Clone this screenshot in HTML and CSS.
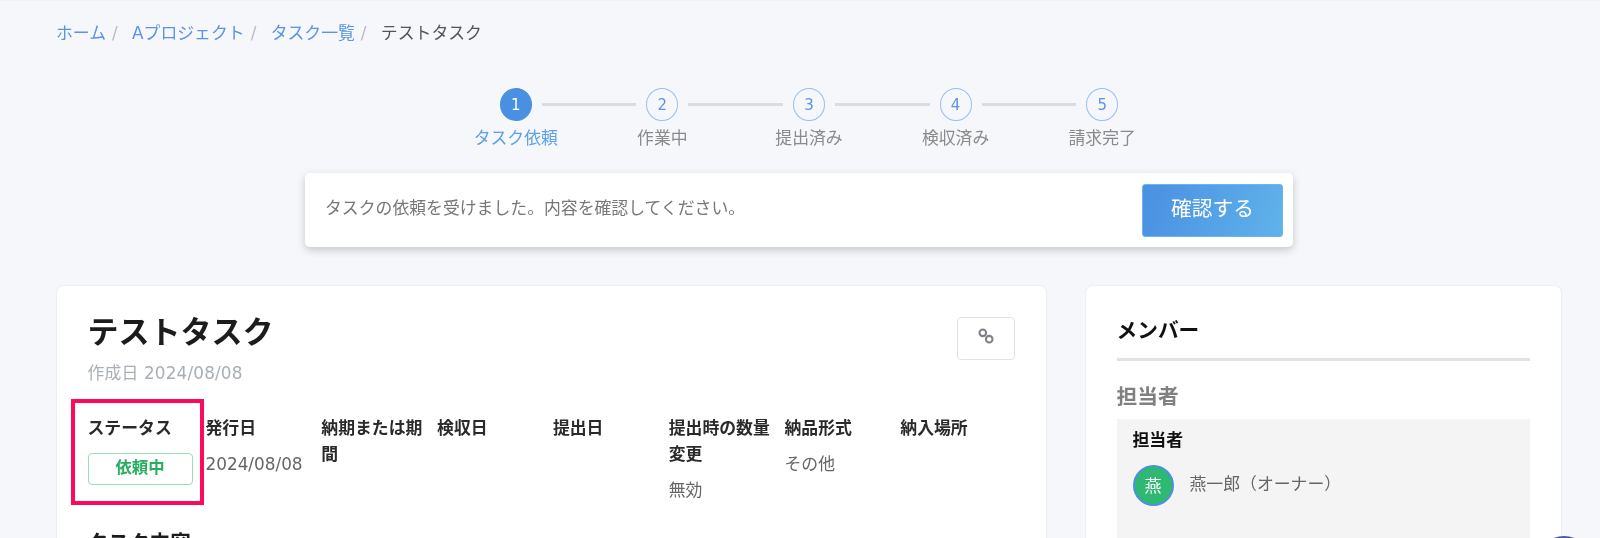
FILE: index.html
```html
<!DOCTYPE html>
<html lang="ja">
<head>
<meta charset="utf-8">
<title>テストタスク</title>
<link rel="stylesheet" href="styles.css">
</head>
<body>
<div class="page">
  <nav class="crumbs">
    <a class="crumb">ホーム</a><span class="sep">/</span>
    <a class="crumb">Aプロジェクト</a><span class="sep">/</span>
    <a class="crumb">タスク一覧</a><span class="sep">/</span>
    <span class="crumb-current">テストタスク</span>
  </nav>

  <ol class="steps">
    <li class="step active"><div class="track"><span class="seg blank"></span><span class="dot">1</span><span class="seg"></span></div><span class="step-label">タスク依頼</span></li>
    <li class="step"><div class="track"><span class="seg"></span><span class="dot">2</span><span class="seg"></span></div><span class="step-label">作業中</span></li>
    <li class="step"><div class="track"><span class="seg"></span><span class="dot">3</span><span class="seg"></span></div><span class="step-label">提出済み</span></li>
    <li class="step"><div class="track"><span class="seg"></span><span class="dot">4</span><span class="seg"></span></div><span class="step-label">検収済み</span></li>
    <li class="step"><div class="track"><span class="seg"></span><span class="dot">5</span><span class="seg blank"></span></div><span class="step-label">請求完了</span></li>
  </ol>

  <div class="notice">
    <p class="notice-text">タスクの依頼を受けました。内容を確認してください。</p>
    <button class="notice-btn">確認する</button>
  </div>

  <div class="columns">
    <section class="card main">
      <div class="head">
        <div>
          <h1 class="title">テストタスク</h1>
          <p class="created">作成日 2024/08/08</p>
        </div>
        <button class="link-btn" aria-label="リンク">
          <svg class="link-icon" viewBox="0 0 16 16" width="16" height="16" fill="none" stroke="#7f8286" stroke-width="2.1">
            <circle cx="4.8" cy="4.8" r="3.3"/>
            <circle cx="11.2" cy="11.2" r="3.3"/>
          </svg>
        </button>
      </div>
      <div class="meta">
        <div class="meta-item status">
          <div class="meta-label">ステータス</div>
          <div class="badge">依頼中</div>
          <div class="highlight"></div>
        </div>
        <div class="meta-item"><div class="meta-label">発行日</div><div class="meta-value">2024/08/08</div></div>
        <div class="meta-item"><div class="meta-label">納期または期間</div></div>
        <div class="meta-item"><div class="meta-label">検収日</div></div>
        <div class="meta-item"><div class="meta-label">提出日</div></div>
        <div class="meta-item"><div class="meta-label">提出時の数量変更</div><div class="meta-value">無効</div></div>
        <div class="meta-item"><div class="meta-label">納品形式</div><div class="meta-value">その他</div></div>
        <div class="meta-item"><div class="meta-label">納入場所</div></div>
      </div>
      <h2 class="section-title">タスク内容</h2>
    </section>

    <aside class="card side">
      <h2 class="side-title">メンバー</h2>
      <h3 class="side-sub">担当者</h3>
      <div class="panel">
        <div class="panel-label">担当者</div>
        <div class="person">
          <span class="avatar">燕</span>
          <span class="person-name">燕一郎（オーナー）</span>
        </div>
      </div>
    </aside>
  </div>
</div>
<div class="float-btn"></div>
</body>
</html>
```

FILE: styles.css
```css
* { box-sizing: border-box; }
html, body { margin: 0; padding: 0; height: 100%; overflow: hidden; }
body {
  background: #f5f7fb;
  color: #333;
  font-family: "DejaVu Sans", "Noto Sans CJK JP", sans-serif;
  font-size: 16.85px;
  position: relative;
}
p, h1, h2, h3, ol { margin: 0; padding: 0; }
.page { height: 538px; padding: 22px 39px 0 57px; border-top: 1px solid #f0f1f4; overflow: hidden; filter: blur(.3px); }

.crumbs { display: flex; align-items: center; height: 21px; line-height: 21px; white-space: nowrap; margin-left: -1px; }
.crumb { color: #5a94e4; }
.crumb-current { color: #555; margin-left: 13px; }
.sep { color: #bbb; margin: 0 0 0 6px; width: 7px; }
.sep + .crumb { margin-left: 13px; }

.steps { list-style: none; display: flex; margin: 44px 0 0 385.5px; }
.step { width: 146.6px; display: flex; flex-direction: column; align-items: center; }
.track { width: 100%; display: flex; align-items: center; }
.seg { flex: 1; height: 2.5px; background: #dcdcdc; }
.seg:first-child { margin-right: 10px; }
.seg:last-child { margin-left: 10px; }
.seg.blank { background: transparent; }
.dot {
  width: 32px; height: 33px; border-radius: 50%;
  border: 1.5px solid #98bdee;
  color: #5a94e4; background: transparent;
  display: flex; align-items: center; justify-content: center;
  font-size: 15px;
}
.step.active .dot { background: #4a90e2; border-color: #4a90e2; color: #fff; }
.step-label { margin-top: 5px; line-height: 24px; color: #8a8a8a; white-space: nowrap; }
.step.active .step-label { color: #5fa0e8; }

.notice {
  margin: 23px 0 0 248px;
  width: 988px; height: 74px;
  background: #fff; border-radius: 5px;
  box-shadow: 0 3px 8px rgba(0,0,0,.2);
  display: flex; align-items: center; justify-content: space-between;
  padding: 0 10px 0 20px;
}
.notice-text { color: #777; padding-bottom: 7px; }
.notice-btn {
  width: 141px; height: 53px; padding: 0 0 6px;
  border: 1px solid #6cb4ee; border-radius: 3px;
  background: linear-gradient(105deg, #4a90e2, #5fb2ea);
  color: #fff; font: inherit; font-size: 20.8px;
}

.columns { display: grid; grid-template-columns: 989px 475.5px; column-gap: 39.5px; margin-top: 39px; }
.card { background: #fff; border-radius: 6px; box-shadow: 0 0 2px rgba(0,0,0,.14); height: 400px; }
.main { padding: 26px 31px 0 30.5px; }
.head { display: flex; justify-content: space-between; align-items: flex-start; }
.title { font-size: 31px; line-height: 40px; font-weight: 700; color: #1c1c1c; }
.created { margin-top: 8px; line-height: 26px; color: #a6b0b6; letter-spacing: .15px; }
.link-btn {
  margin-top: 5px; width: 58px; height: 43px; padding: 0;
  background: #fff; border: 1px solid #e2e2e2; border-radius: 4px;
  display: flex; align-items: center; justify-content: center;
}
.link-icon { display: block; margin-top: -5px; }

.meta { display: grid; grid-template-columns: 118px repeat(7, 115.8px); margin-top: 29px; min-height: 88px; }
.meta-item { position: relative; }
.meta-label { line-height: 26px; font-weight: 700; color: #2a2a2a; }
.meta-value { margin-top: 10px; line-height: 26px; color: #666; }
.badge {
  margin-top: 12px; width: 105px; height: 32px;
  border: 1px solid #97dfb6; border-radius: 4px;
  color: #27ae60; font-size: 16.4px; font-weight: 700; text-align: center; line-height: 27px;
}
.highlight {
  position: absolute; left: -17px; top: -16px;
  width: 133px; height: 106px;
  border: 4px solid #ff0a5a;
}
.section-title { margin-top: 25px; font-size: 20.7px; line-height: 30px; font-weight: 700; color: #1c1c1c; }

.side { padding: 30px 31px 0 31px; }
.side-title { font-size: 20.7px; line-height: 30px; font-weight: 700; color: #111; padding-bottom: 12px; border-bottom: 3px solid #e2e2e2; }
.side-sub { margin-top: 21px; font-size: 20.7px; line-height: 30px; font-weight: 700; color: #808080; }
.panel { margin-top: 7px; height: 220px; background: #f4f4f5; padding: 8px 16px 0; }
.panel-label { line-height: 26px; font-weight: 700; color: #111; }
.person { display: flex; align-items: center; gap: 16px; margin-top: 12px; }
.avatar {
  width: 41px; height: 41px; border-radius: 50%;
  background: #2eb872; border: 2px solid #4a90e2;
  color: #fff; display: flex; align-items: center; justify-content: center;
  font-size: 17px; padding-bottom: 3px;
}
.person-name { color: #666; margin-top: -6px; }

.float-btn {
  position: absolute; left: 1535.5px; top: 536px;
  width: 56px; height: 56px; border-radius: 50%;
  background: #4a5cb0;
}
```
